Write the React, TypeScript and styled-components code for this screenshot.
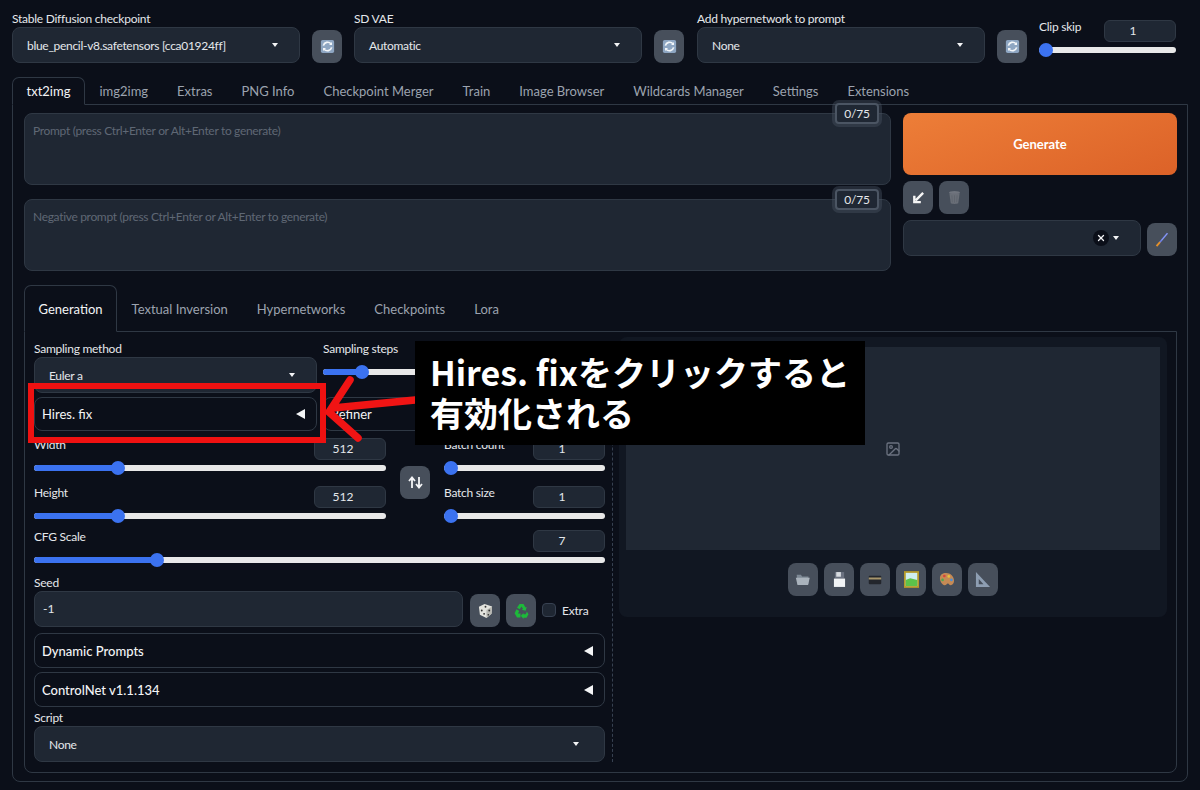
import React from 'react';
import styled, {createGlobalStyle} from "styled-components";
import {Image as ImageIcon, X} from "lucide-react";

const Global = createGlobalStyle`
  html, body { margin: 0; padding: 0; background: #0b0f19; }
  body { font-family: Lato, "Noto Sans", sans-serif; color: #e5e7eb; }
`

const RefreshIcon = () => (
    <svg width="15" height="15" viewBox="0 0 17 17">
        <rect x="1" y="1" width="15" height="15" rx="2" fill="#8ea6c2"/>
        <path d="M3.800 7.500A5 5 0 0 1 12.400 5.400M13.200 9.500A5 5 0 0 1 4.600 11.600" fill="none" stroke="#f3f6f9" strokeWidth="1.900"/>
        <path d="M13.600 3.400v3.400h-3.400zM3.400 13.600v-3.400h3.400z" fill="#f3f6f9"/>
    </svg>
);
const ArrowIcon = () => (
    <svg width="13" height="13" viewBox="0 0 14 14">
        <path d="M12 2 4 10M2.500 5v7h7" fill="none" stroke="#f5f5f5" strokeWidth="2.600"/>
    </svg>
);
const TrashIcon = () => (
    <svg width="13" height="15" viewBox="0 0 15 17">
        <ellipse cx="7.500" cy="2.800" rx="6.300" ry="1.900" fill="#70757e"/>
        <path d="M1.600 4 3.200 15.200c1.500 1 7 1 8.600 0L13.400 4z" fill="#6a6f78"/>
        <path d="M4.500 6l.5 8M7.500 6v8.400M10.500 6l-.5 8" stroke="#5c616a" strokeWidth=".8"/>
    </svg>
);
const BrushIcon = () => (
    <svg width="14" height="17" viewBox="0 0 18 20">
        <path d="M16 2 6 14" stroke="#6d7fe6" strokeWidth="2"/>
        <path d="M16 2 8.500 11" stroke="#a8b4f4" strokeWidth=".7"/>
        <path d="M6.400 13.400 2 18.400" stroke="#e5912a" strokeWidth="2.400"/>
    </svg>
);
const DiceIcon = () => (
    <svg width="15" height="16" viewBox="0 0 16 17">
        <path d="M7 1 15 3.600 14.400 11.500 9 16 2 12.500 1 4z" fill="#e4e4de"/>
        <path d="M9 7.500 15 3.600 14.400 11.500 9 16z" fill="#b9b9b3"/>
        <circle cx="4" cy="8" r="1" fill="#333"/><circle cx="6.500" cy="11.500" r="1" fill="#333"/>
        <circle cx="8" cy="4" r="1" fill="#333"/>
        <circle cx="12" cy="8" r="1" fill="#333"/><circle cx="11" cy="12.500" r=".9" fill="#333"/>
    </svg>
);
const RecycleIcon = () => (
    <svg width="15" height="16" viewBox="0 0 15 16" fill="#1db93a">
        <path d="M5.500 1h4l2 3.400 1.200-.7-1 4-4-1 1.300-.8L7.500 3.500 5.800 6.300 3 4.700z"/>
        <path d="M2.500 6.200 5.300 8 3.900 10.400H6.500v4H3L.6 10.300z"/>
        <path d="M12.800 8.400 14.500 11.300 12.500 14.800H9.500v1.200L6.800 12.700 9.500 10v1.200h2l.9-1.300z"/>
    </svg>
);
const FolderIcon = () => (
    <svg width="16" height="15" viewBox="0 0 19 17">
        <path d="M2 3h5l1.500 2H16v9H3z" fill="#7d8894"/>
        <path d="M1 6.500h16.500L15.500 15H3z" fill="#aab3bc"/>
    </svg>
);
const SaveIcon = () => (
    <svg width="13" height="17" viewBox="0 0 14 18">
        <rect x="2" y="1" width="10" height="7" fill="#6b7280"/>
        <rect x="3.500" y="1" width="5" height="5" fill="#d7dbe0"/>
        <rect x="1" y="8" width="12" height="9" fill="#f1f3f5"/>
    </svg>
);
const ZipIcon = () => (
    <svg width="14" height="10" viewBox="0 0 16 12">
        <rect x=".5" y="1" width="15" height="10" rx="1" fill="#23262c"/>
        <rect x=".5" y="3" width="15" height="2.400" fill="#a8966c"/>
    </svg>
);
const PictureIcon = () => (
    <svg width="15" height="17" viewBox="0 0 17 19">
        <rect width="17" height="19" fill="#b59a2a"/>
        <rect x="2" y="2" width="13" height="15" fill="#cfeef0"/>
        <path d="M2 10l5-2 8 2v7H2z" fill="#5cc24a"/>
    </svg>
);
const PaletteIcon = () => (
    <svg width="16" height="15" viewBox="0 0 18 17">
        <path d="M8 1c5 0 9 4 9 9 0 3-2 5-3.600 5-2 0-2-2-3.400-2s-2 2.500-4 2S1 11 1 7c0-4 3-6 7-6z" fill="#c58a55"/>
        <circle cx="6" cy="4.500" r="1.500" fill="#d9433a"/><circle cx="11" cy="5" r="1.500" fill="#e8c23c"/>
        <circle cx="14" cy="9" r="1.500" fill="#4b8fd8"/><circle cx="4" cy="9" r="1.500" fill="#4fa84f"/>
    </svg>
);
const RulerIcon = () => (
    <svg width="16" height="17" viewBox="0 0 17 18">
        <path fillRule="evenodd" d="M1 1 16 17H1zM4 8.500V14h5z" fill="#8e9eb2"/>
    </svg>
);
const SwapIcon = () => (
    <svg width="15" height="13" viewBox="0 0 15 13">
        <path d="M4 12V2M1 5l3-3.500L7 5M11 1v10M8 8l3 3.500L14 8" fill="none" stroke="#f3f4f6" strokeWidth="1.800"/>
    </svg>
);

const Refresh = () => <IconButton><RefreshIcon/></IconButton>;

const Dropdown = ({value, clear}: {value?: string; clear?: boolean}) => (
    <Select>
        <SelectText>{value}</SelectText>
        {clear && <ClearDot><X size={10} strokeWidth={3}/></ClearDot>}
        <Caret/>
    </Select>
);

const Slider = ({value}: {value: number}) => (
    <Track>
        <Fill $value={value}/>
        <Thumb $value={value}/>
    </Track>
);

const SliderField = ({label, num, value}: {label: string; num: string; value: number}) => (
    <SliderBox>
        <SliderHead>
            <Label>{label}</Label>
            <NumberBox>{num}</NumberBox>
        </SliderHead>
        <Slider value={value}/>
    </SliderBox>
);

const Prompt = ({text}: {text: string}) => (
    <PromptBox>
        <Placeholder>{text}</Placeholder>
        <Counter>0/75</Counter>
    </PromptBox>
);

const Accordion = ({label, $bold}: {label: string; $bold?: boolean}) => (
    <AccordionBox>
        <AccordionLabel $bold={$bold}>{label}</AccordionLabel>
        <LeftTriangle/>
    </AccordionBox>
);

export default function App() {
    return (
        <Page>
            <Global/>
            <TopRow>
                <TopField>
                    <Label>Stable Diffusion checkpoint</Label>
                    <Dropdown value="blue_pencil-v8.safetensors [cca01924ff]"/>
                </TopField>
                <Refresh/>
                <TopField>
                    <Label>SD VAE</Label>
                    <Dropdown value="Automatic"/>
                </TopField>
                <Refresh/>
                <ThirdField>
                    <Label>Add hypernetwork to prompt</Label>
                    <Dropdown value="None"/>
                </ThirdField>
                <Refresh/>
                <ClipSkip>
                    <SliderHead>
                        <Label>Clip skip</Label>
                        <NumberBox>1</NumberBox>
                    </SliderHead>
                    <Slider value={0}/>
                </ClipSkip>
            </TopRow>

            <MainTabs>
                {["txt2img", "img2img", "Extras", "PNG Info", "Checkpoint Merger", "Train", "Image Browser", "Wildcards Manager", "Settings", "Extensions"].map((t, i) => (
                    <MainTab key={t} $active={i === 0}>{t}</MainTab>
                ))}
            </MainTabs>
            <MainPanel>
                <PromptRow>
                    <PromptCol>
                        <Prompt text="Prompt (press Ctrl+Enter or Alt+Enter to generate)"/>
                        <Prompt text="Negative prompt (press Ctrl+Enter or Alt+Enter to generate)"/>
                    </PromptCol>
                    <ActionCol>
                        <GenerateButton>Generate</GenerateButton>
                        <ToolRow>
                            <IconButton><ArrowIcon/></IconButton>
                            <IconButton><TrashIcon/></IconButton>
                        </ToolRow>
                        <StyleRow>
                            <Dropdown clear/>
                            <IconButton><BrushIcon/></IconButton>
                        </StyleRow>
                    </ActionCol>
                </PromptRow>

                <SubTabs>
                    {["Generation", "Textual Inversion", "Hypernetworks", "Checkpoints", "Lora"].map((t, i) => (
                        <SubTab key={t} $active={i === 0}>{t}</SubTab>
                    ))}
                </SubTabs>
                <SubPanel>
                    <Settings>
                        <TwoCols>
                            <TopField>
                                <Label>Sampling method</Label>
                                <Dropdown value="Euler a"/>
                            </TopField>
                            <TopField>
                                <SliderHead>
                                    <Label>Sampling steps</Label>
                                    <NumberBox/>
                                </SliderHead>
                                <Slider value={14}/>
                            </TopField>
                        </TwoCols>
                        <TwoColsAcc>
                            <Accordion label="Hires. fix"/>
                            <Accordion label="Refiner"/>
                        </TwoColsAcc>
                        <Dimensions>
                            <DimCol>
                                <SliderField label="Width" num="512" value={24}/>
                                <SliderField label="Height" num="512" value={24}/>
                            </DimCol>
                            <IconButton><SwapIcon/></IconButton>
                            <BatchCol>
                                <SliderField label="Batch count" num="1" value={0}/>
                                <SliderField label="Batch size" num="1" value={0}/>
                            </BatchCol>
                        </Dimensions>
                        <CfgBox>
                            <SliderField label="CFG Scale" num="7" value={21.500}/>
                        </CfgBox>
                        <SeedLabel>Seed</SeedLabel>
                        <SeedRow>
                            <SeedInput>-1</SeedInput>
                            <IconButton><DiceIcon/></IconButton>
                            <IconButton><RecycleIcon/></IconButton>
                            <CheckBox/>
                            <ExtraLabel>Extra</ExtraLabel>
                        </SeedRow>
                        <FirstAccordion><Accordion label="Dynamic Prompts" $bold/></FirstAccordion>
                        <NextAccordion><Accordion label="ControlNet v1.1.134" $bold/></NextAccordion>
                        <ScriptField>
                            <Label>Script</Label>
                            <Dropdown value="None"/>
                        </ScriptField>
                    </Settings>
                    <Results>
                        <Gallery>
                            <ImageArea><ImageIcon size={16} color="#6b7280"/></ImageArea>
                            <GalleryTools>
                                <IconButton><FolderIcon/></IconButton>
                                <IconButton><SaveIcon/></IconButton>
                                <IconButton><ZipIcon/></IconButton>
                                <IconButton><PictureIcon/></IconButton>
                                <IconButton><PaletteIcon/></IconButton>
                                <IconButton><RulerIcon/></IconButton>
                            </GalleryTools>
                        </Gallery>
                    </Results>
                </SubPanel>
            </MainPanel>

            <RedFrame/>
            <RedArrow width="100" height="80" viewBox="0 0 100 80">
                <path d="M92 30 10 38M27 10 6 42 35 68" fill="none" stroke="#f01414" strokeWidth="7.500" strokeLinecap="round" strokeLinejoin="miter"/>
            </RedArrow>
            <Callout>Hires. fixをクリックすると<br/>有効化される</Callout>
        </Page>
    );
}

const Page = styled.div`
  position: relative;
  width: 1200px;
  height: 790px;
  overflow: hidden;
  background: #0b0f19;
`
const TopRow = styled.div`
  display: flex;
  align-items: flex-end;
  gap: 12px;
  padding: 12px 24px 0 12px;
`
const TopField = styled.div`
  display: flex;
  flex-direction: column;
  flex: 0 0 288px;
  min-width: 0;
`
const ThirdField = styled(TopField)`
  margin-left: 1px;
`
const Label = styled.div`
  padding-bottom: 2px;
  font-size: 12px;
  letter-spacing: -0.25px;
  line-height: 13px;
  color: #e5e7eb;
`
const Select = styled.div`
  display: flex;
  align-items: center;
  flex: 0 0 36px;
  height: 36px;
  box-sizing: border-box;
  padding: 0 21px 0 14px;
  background: #1f2733;
  border: 1px solid #2f3844;
  border-radius: 8px;
  font-size: 12px;
  letter-spacing: -0.3px;
  color: #e5e7eb;
`
const SelectText = styled.div`
  flex: 1;
  white-space: nowrap;
`
const Caret = styled.span`
  width: 0;
  height: 0;
  border-left: 3.5px solid transparent;
  border-right: 3.5px solid transparent;
  border-top: 4px solid #f3f4f6;
`
const ClearDot = styled.span`
  display: flex;
  align-items: center;
  justify-content: center;
  width: 16px;
  height: 16px;
  margin-right: 4px;
  border-radius: 50%;
  background: #0b0f19;
  color: #f3f4f6;
`
const IconButton = styled.div`
  display: flex;
  align-items: center;
  justify-content: center;
  flex: 0 0 30px;
  width: 30px;
  height: 33px;
  border-radius: 8px;
  background: #474f5b;
`
const ClipSkip = styled.div`
  display: flex;
  flex-direction: column;
  flex: 0 0 137px;
  margin-bottom: 3px;
`
const SliderHead = styled.div`
  display: flex;
  align-items: flex-start;
  justify-content: space-between;
  height: 22px;
`
const NumberBox = styled.div`
  width: 72px;
  height: 22px;
  box-sizing: border-box;
  padding-right: 14px;
  background: #1f2733;
  border: 1px solid #2f3844;
  border-radius: 6px;
  font-size: 12px;
  line-height: 20px;
  text-align: center;
  color: #e5e7eb;
`
const Track = styled.div`
  position: relative;
  height: 6px;
  margin-top: 5px;
  margin-bottom: 7px;
  border-radius: 3px;
  background: #e8e8e8;
`
const Fill = styled.div<{ $value: number }>`
  width: ${p => p.$value}%;
  height: 100%;
  border-radius: 3px 0 0 3px;
  background: #3b72f0;
`
const Thumb = styled.div<{ $value: number }>`
  position: absolute;
  top: -4px;
  left: calc(${p => p.$value}% - ${p => p.$value === 0 ? 0 : 7}px);
  width: 14px;
  height: 14px;
  border-radius: 50%;
  background: #3b72f0;
`
const MainTabs = styled.div`
  display: flex;
  height: 27px;
  margin: 14px 0 0 12px;
  position: relative;
  z-index: 1;
`
const MainTab = styled.div<{ $active?: boolean }>`
  padding: 0 13.5px;
  height: ${p => p.$active ? 28 : 27}px;
  box-sizing: border-box;
  font-size: 13px;
  line-height: 27px;
  color: ${p => p.$active ? "#f3f4f6" : "#9ca3af"};
  background: ${p => p.$active ? "#0b0f19" : "transparent"};
  border: 1px solid ${p => p.$active ? "#2f3844" : "transparent"};
  border-bottom-color: ${p => p.$active ? "#0b0f19" : "transparent"};
  border-radius: 7px 7px 0 0;
`
const MainPanel = styled.div`
  width: 1176px;
  height: 678px;
  box-sizing: border-box;
  margin-left: 12px;
  padding: 8px 10px 0 11px;
  border: 1px solid #2f3844;
  border-radius: 0 0 8px 8px;
`
const PromptRow = styled.div`
  display: flex;
  gap: 12px;
`
const PromptCol = styled.div`
  display: flex;
  flex-direction: column;
  gap: 14px;
  width: 867px;
`
const PromptBox = styled.div`
  position: relative;
  height: 72px;
  box-sizing: border-box;
  padding: 9px 8px;
  background: #1f2733;
  border: 1px solid #2f3844;
  border-radius: 8px;
`
const Placeholder = styled.div`
  font-size: 12px;
  letter-spacing: -0.32px;
  line-height: 16px;
  color: #5f6875;
`
const Counter = styled.div`
  position: absolute;
  top: -11px;
  right: 11px;
  width: 44px;
  height: 21px;
  box-sizing: border-box;
  background: #1f2733;
  border: 2px solid #4b5563;
  border-radius: 4px;
  box-shadow: 0 0 0 3px rgba(75, 85, 99, 0.4);
  font-size: 12px;
  letter-spacing: -0.2px;
  line-height: 17px;
  text-align: center;
  color: #e5e7eb;
`
const ActionCol = styled.div`
  display: flex;
  flex-direction: column;
  width: 274px;
`
const GenerateButton = styled.div`
  height: 62px;
  border-radius: 8px;
  background: linear-gradient(160deg, #ed7e38, #dc6228);
  font-size: 13px;
  font-weight: 700;
  line-height: 62px;
  text-align: center;
  color: #fff;
`
const ToolRow = styled.div`
  display: flex;
  gap: 6px;
  margin-top: 6px;
`
const StyleRow = styled.div`
  display: flex;
  align-items: flex-end;
  gap: 6px;
  margin-top: 6px;
  & > div:first-child { flex: 1; }
`
const SubTabs = styled.div`
  display: flex;
  height: 46px;
  margin-top: 14px;
  position: relative;
  z-index: 1;
`
const SubTab = styled.div<{ $active?: boolean }>`
  height: ${p => p.$active ? 47 : 46}px;
  box-sizing: border-box;
  padding: 0 13.5px;
  font-size: 13px;
  line-height: 46px;
  color: ${p => p.$active ? "#f3f4f6" : "#9ca3af"};
  background: ${p => p.$active ? "#0b0f19" : "transparent"};
  border: 1px solid ${p => p.$active ? "#2f3844" : "transparent"};
  border-bottom-color: ${p => p.$active ? "#0b0f19" : "transparent"};
  border-radius: 7px 7px 0 0;
`
const SubPanel = styled.div`
  display: flex;
  height: 442px;
  box-sizing: border-box;
  padding: 5px 9px 10px 9px;
  border: 1px solid #2f3844;
  border-radius: 0 0 8px 8px;
`
const Settings = styled.div`
  width: 571px;
  flex: none;
  padding-top: 5px;
`
const TwoCols = styled.div`
  display: grid;
  grid-template-columns: 283px 282px;
  gap: 6px;
  height: 51px;
`
const TwoColsAcc = styled(TwoCols)`
  height: 34px;
  margin-top: 4px;
`
const AccordionBox = styled.div`
  display: flex;
  align-items: center;
  justify-content: space-between;
  height: 100%;
  box-sizing: border-box;
  padding: 0 11px 0 7px;
  border: 1px solid #2f3844;
  border-radius: 8px;
`
const AccordionLabel = styled.div<{ $bold?: boolean }>`
  font-size: 13px;
  font-weight: ${p => p.$bold ? 500 : 400};
  color: #f3f4f6;
`
const LeftTriangle = styled.span`
  width: 0;
  height: 0;
  border-top: 5px solid transparent;
  border-bottom: 5px solid transparent;
  border-right: 9px solid #f3f4f6;
`
const Dimensions = styled.div`
  display: flex;
  align-items: center;
  gap: 14px;
  margin-top: 7px;
`
const DimCol = styled.div`
  display: flex;
  flex-direction: column;
  gap: 8px;
  width: 352px;
`
const BatchCol = styled(DimCol)`
  width: 161px;
`
const SliderBox = styled.div`
  display: flex;
  flex-direction: column;
  height: 40px;
`
const CfgBox = styled.div`
  margin-top: 4px;
`
const SeedLabel = styled(Label)`
  margin-top: 6px;
`
const SeedRow = styled.div`
  display: flex;
  align-items: flex-end;
  height: 36px;
`
const SeedInput = styled.div`
  width: 429px;
  height: 36px;
  box-sizing: border-box;
  margin-right: 7px;
  padding-left: 8px;
  background: #1f2733;
  border: 1px solid #2f3844;
  border-radius: 8px;
  font-size: 12px;
  line-height: 34px;
  color: #e5e7eb;
  & + div { margin-right: 6px; }
`
const CheckBox = styled.span`
  width: 14px;
  height: 14px;
  box-sizing: border-box;
  margin: 0 6px 10px 6px;
  background: #1f2733;
  border: 1px solid #374151;
  border-radius: 4px;
`
const ExtraLabel = styled.span`
  font-size: 12px;
  letter-spacing: -0.2px;
  line-height: 15px;
  margin-bottom: 9px;
  color: #e5e7eb;
`
const FirstAccordion = styled.div`
  height: 35px;
  margin-top: 6px;
`
const NextAccordion = styled(FirstAccordion)`
  margin-top: 4px;
`
const ScriptField = styled.div`
  display: flex;
  flex-direction: column;
  margin-top: 4px;
  & > div:last-child { padding-right: 25px; }
`
const Results = styled.div`
  flex: 1;
  margin: 5px 0 0 7px;
  padding-left: 6px;
  border-left: 1px dashed #374151;
`
const Gallery = styled.div`
  height: 280px;
  margin-top: -5px;
  box-sizing: border-box;
  padding: 10px 7px;
  border-radius: 8px;
  background: #111722;
`
const ImageArea = styled.div`
  display: flex;
  align-items: center;
  justify-content: center;
  height: 203px;
  background: #1f2733;
`
const GalleryTools = styled.div`
  display: flex;
  justify-content: center;
  gap: 6px;
  margin-top: 13px;
`
const RedFrame = styled.div`
  position: absolute;
  left: 28px;
  top: 383px;
  width: 298px;
  height: 60px;
  box-sizing: border-box;
  border: 6px solid #ee1111;
`
const RedArrow = styled.svg`
  position: absolute;
  left: 323px;
  top: 370px;
`
const Callout = styled.div`
  position: absolute;
  left: 415px;
  top: 341px;
  width: 450px;
  height: 104px;
  box-sizing: border-box;
  padding: 10px 15px;
  background: #000;
  font-family: "Noto Sans CJK JP", sans-serif;
  font-size: 34px;
  font-weight: 700;
  line-height: 41px;
  color: #fff;
`
